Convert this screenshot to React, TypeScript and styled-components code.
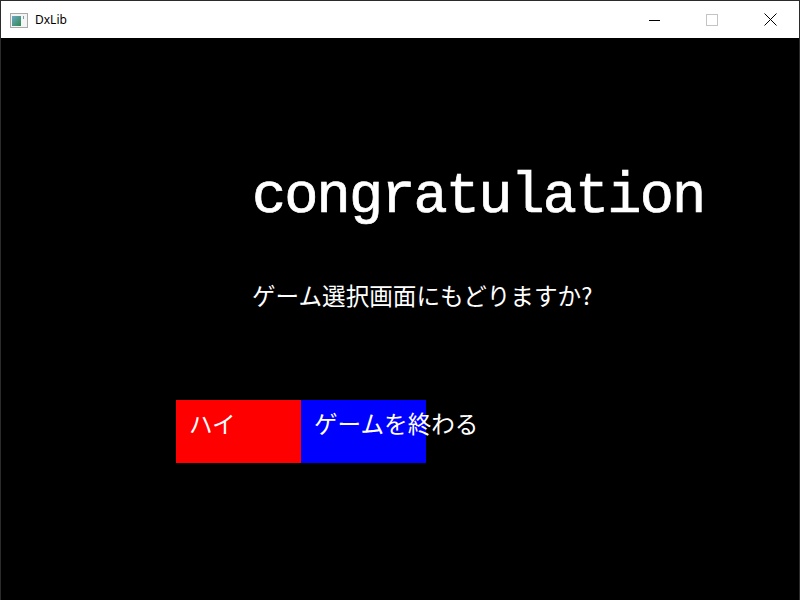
import React from 'react';
import styled, {createGlobalStyle} from 'styled-components';

const GlobalStyle = createGlobalStyle`
  html, body {
    margin: 0;
    padding: 0;
    background: #000;
  }
  * {
    box-sizing: border-box;
  }
`

const Window = styled.div`
  width: 800px;
  height: 600px;
  display: flex;
  flex-direction: column;
  border: 1px solid #2b2b2b;
  border-bottom: none;
  overflow: hidden;
`

const TitleBar = styled.div`
  height: 37px;
  flex-shrink: 0;
  background: #fff;
  display: flex;
  align-items: center;
`

const AppIcon = styled.div`
  width: 34px;
  display: flex;
  justify-content: center;
  padding-left: 2px;
  padding-top: 1px;
`

const Title = styled.span`
  font-family: "Noto Sans", "Liberation Sans", sans-serif;
  font-size: 12px;
  color: #000;
  flex: 1;
`

const CaptionButton = styled.div`
  width: 58px;
  height: 37px;
  display: flex;
  align-items: center;
  justify-content: center;
`

const Screen = styled.div`
  flex: 1;
  background: #000;
  display: flex;
  flex-direction: column;
  color: #fff;
`

const Heading = styled.div`
  font-family: "Liberation Mono", "DejaVu Sans Mono", monospace;
  font-size: 57px;
  line-height: 60px;
  letter-spacing: -1.9px;
  -webkit-text-stroke: 0.7px #fff;
  margin: 129px 0 0 251px;
`

const Question = styled.div`
  font-family: "Noto Sans CJK JP", sans-serif;
  font-size: 23.6px;
  line-height: 28px;
  margin: 54px 0 0 251px;
`

const Choices = styled.div`
  display: flex;
  margin: 91px 0 0 175px;
`

const Choice = styled.div<{ $bg: string }>`
  width: 125px;
  height: 63px;
  background: ${p => p.$bg};
  font-family: "Noto Sans CJK JP", sans-serif;
  font-size: 23.6px;
  line-height: 28px;
  padding: 9px 0 0 13px;
  white-space: nowrap;
  position: relative;
  z-index: ${p => p.$bg === 'red' ? 0 : 1};
`

const App = () => {
    return (
        <>
            <GlobalStyle/>
            <Window>
                <TitleBar>
                    <AppIcon>
                        <svg width="18" height="15" viewBox="0 0 18 15">
                            <defs>
                                <linearGradient id="pane" x1="0" y1="0" x2="1" y2="1">
                                    <stop offset="0" stopColor="#6fa8c6"/>
                                    <stop offset="1" stopColor="#2f8a4f"/>
                                </linearGradient>
                            </defs>
                            <rect x="0.5" y="0.5" width="17" height="14" fill="#f4f4f4" stroke="#a9a9a9"/>
                            <rect x="2" y="3" width="9" height="10" fill="url(#pane)"/>
                            <rect x="13" y="3" width="1" height="3" fill="#7a9fb5"/>
                        </svg>
                    </AppIcon>
                    <Title>DxLib</Title>
                    <CaptionButton>
                        <svg width="12" height="12" viewBox="0 0 12 12">
                            <rect x="1" y="6" width="11" height="1" fill="#000"/>
                        </svg>
                    </CaptionButton>
                    <CaptionButton>
                        <svg width="12" height="12" viewBox="0 0 12 12">
                            <rect x="0.5" y="0.5" width="11" height="11" fill="none" stroke="#c4c4c4"/>
                        </svg>
                    </CaptionButton>
                    <CaptionButton>
                        <svg width="13" height="13" viewBox="0 0 13 13">
                            <path d="M0.5 0.5 L12.5 12.5 M12.5 0.5 L0.5 12.5" stroke="#000" strokeWidth="1"/>
                        </svg>
                    </CaptionButton>
                </TitleBar>
                <Screen>
                    <Heading>congratulation</Heading>
                    <Question>ゲーム選択画面にもどりますか?</Question>
                    <Choices>
                        <Choice $bg="red">ハイ</Choice>
                        <Choice $bg="blue">ゲームを終わる</Choice>
                    </Choices>
                </Screen>
            </Window>
        </>
    );
};

export default App;
